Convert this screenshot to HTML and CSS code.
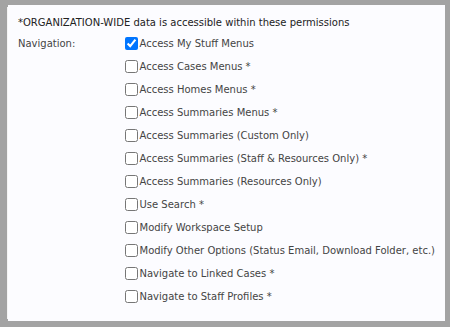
FILE: index.html
```html
<!DOCTYPE html>
<html lang="en">
<head>
    <meta charset="UTF-8">
    <title>Permissions</title>
    <link rel="stylesheet" href="styles.css">
</head>
<body>
    <div class="panel">
        <p class="note">*ORGANIZATION-WIDE data is accessible within these permissions</p>
        <div class="perm-group">
            <div class="group-label">Navigation:</div>
            <div class="perm-list">
                <label class="perm"><input type="checkbox" checked>Access My Stuff Menus</label>
                <label class="perm"><input type="checkbox">Access Cases Menus *</label>
                <label class="perm"><input type="checkbox">Access Homes Menus *</label>
                <label class="perm"><input type="checkbox">Access Summaries Menus *</label>
                <label class="perm"><input type="checkbox">Access Summaries (Custom Only)</label>
                <label class="perm"><input type="checkbox">Access Summaries (Staff &amp; Resources Only) *</label>
                <label class="perm"><input type="checkbox">Access Summaries (Resources Only)</label>
                <label class="perm"><input type="checkbox">Use Search *</label>
                <label class="perm"><input type="checkbox">Modify Workspace Setup</label>
                <label class="perm"><input type="checkbox">Modify Other Options (Status Email, Download Folder, etc.)</label>
                <label class="perm"><input type="checkbox">Navigate to Linked Cases *</label>
                <label class="perm"><input type="checkbox">Navigate to Staff Profiles *</label>
            </div>
        </div>
    </div>
</body>
</html>
```

FILE: styles.css
```css
html, body {
    height: 100%;
}
body {
    margin: 0;
    background-color: #a3a3a3;
    font-family: "DejaVu Sans", Verdana, sans-serif;
    font-size: 10px;
    color: #444;
    padding: 5px 5px 6px 8px;
    box-sizing: border-box;
}
.panel {
    height: 100%;
    box-sizing: border-box;
    background-color: #fcfcff;
    box-shadow: -3px 0 0 -2px #f4f4f4;
    padding: 11px 10px 0 10px;
}
.note {
    margin: 0 0 2px 0;
    color: #222;
    line-height: 14px;
}
.perm-group {
    display: flex;
}
.group-label {
    width: 105px;
    line-height: 23px;
}
.perm-list {
    display: flex;
    flex-direction: column;
}
.perm {
    display: flex;
    align-items: center;
    height: 23px;
    white-space: nowrap;
}
.perm input {
    margin: 0 2px 0 6px;
    width: 13px;
    height: 13px;
}
```
